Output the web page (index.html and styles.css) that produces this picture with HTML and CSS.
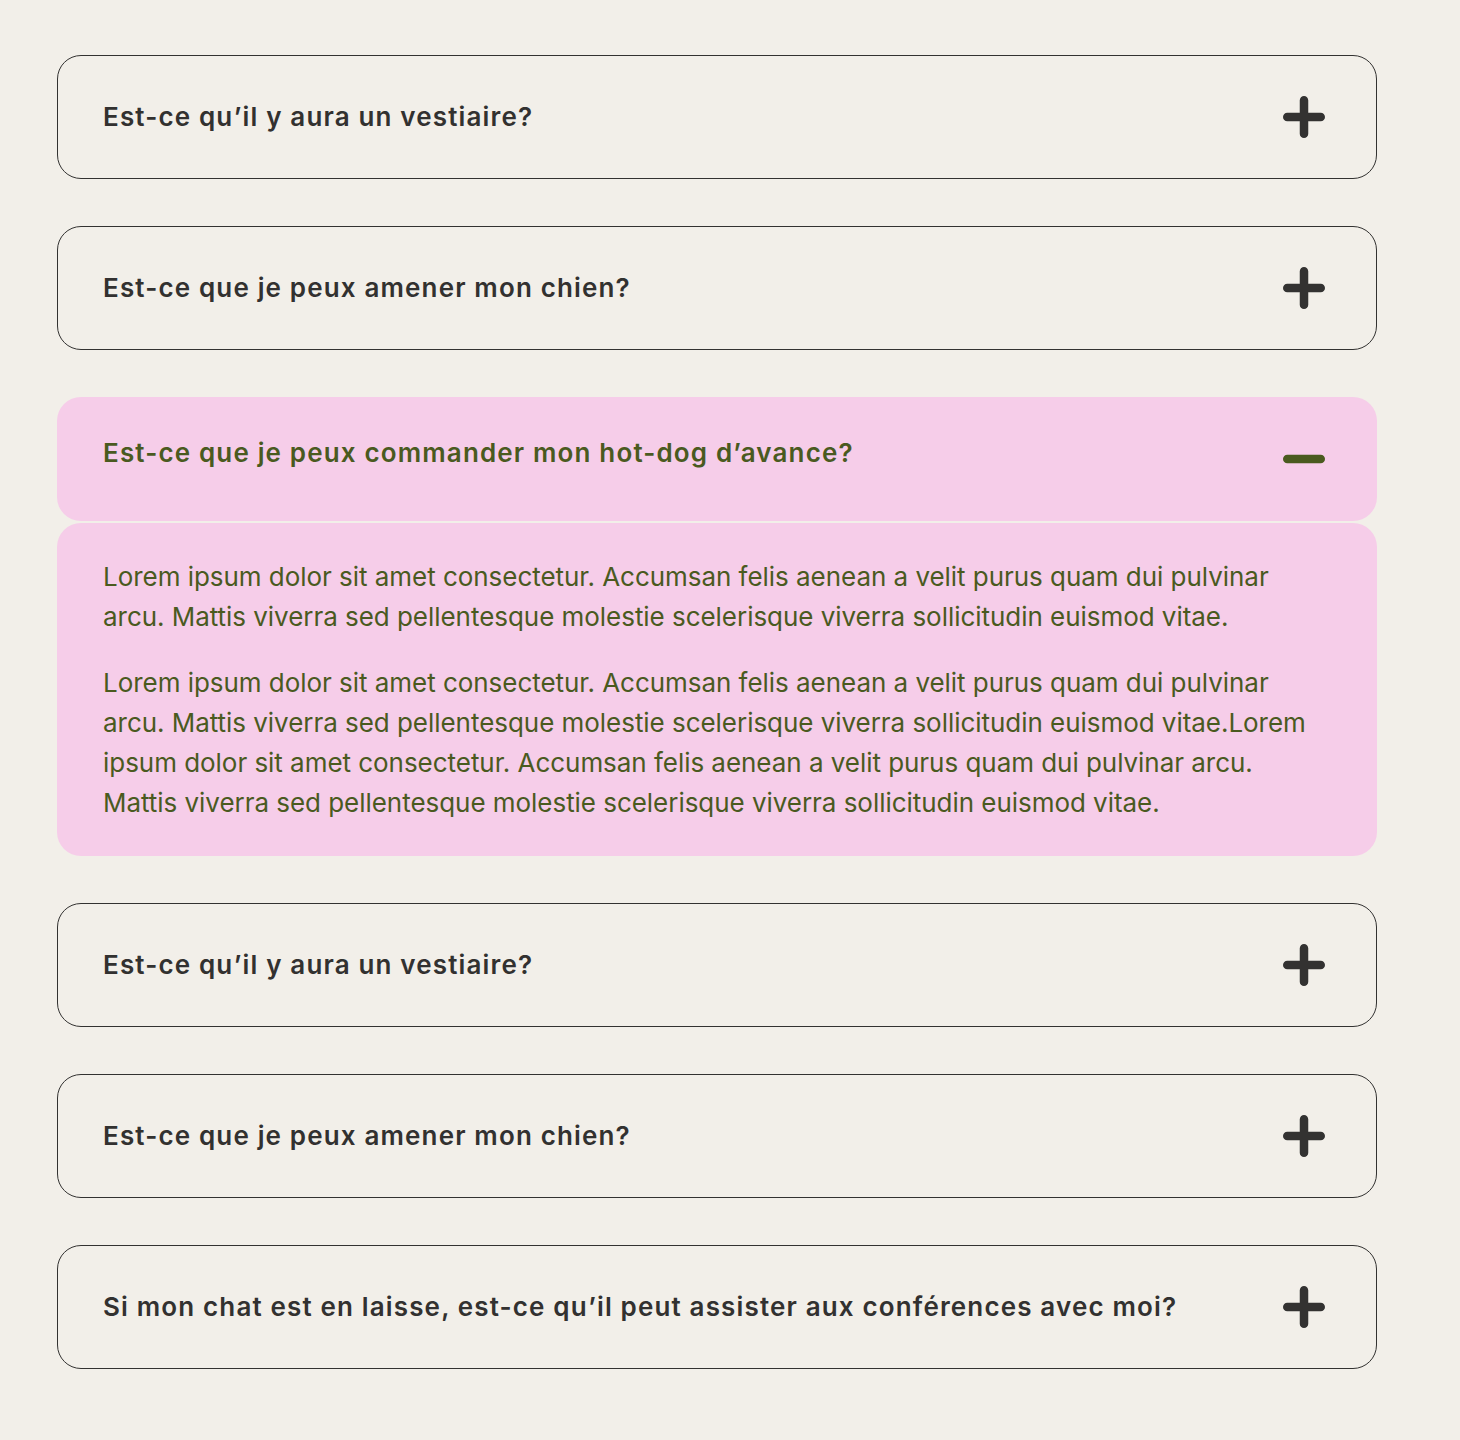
FILE: index.html
```html
<!DOCTYPE html>
<html lang="fr">
<head>
<meta charset="utf-8">
<title>FAQ</title>
<link rel="stylesheet" href="styles.css">
</head>
<body>
<main class="faq">
  <div class="item">
    <div class="head">
      <span class="q">Est-ce qu’il y aura un vestiaire?</span>
      <svg class="icon" viewBox="0 0 42 42"><path d="M4.25 21H37.75M21 4.25V37.75"/></svg>
    </div>
  </div>
  <div class="item">
    <div class="head">
      <span class="q">Est-ce que je peux amener mon chien?</span>
      <svg class="icon" viewBox="0 0 42 42"><path d="M4.25 21H37.75M21 4.25V37.75"/></svg>
    </div>
  </div>
  <div class="item open">
    <div class="head">
      <span class="q">Est-ce que je peux commander mon hot-dog d’avance?</span>
      <svg class="icon" viewBox="0 0 42 42"><path d="M4.25 21H37.75"/></svg>
    </div>
    <div class="body">
      <p>Lorem ipsum dolor sit amet consectetur. Accumsan felis aenean a velit purus quam dui pulvinar arcu. Mattis viverra sed pellentesque molestie scelerisque viverra sollicitudin euismod vitae.</p>
      <p>Lorem ipsum dolor sit amet consectetur. Accumsan felis aenean a velit purus quam dui pulvinar arcu. Mattis viverra sed pellentesque molestie scelerisque viverra sollicitudin euismod vitae.Lorem ipsum dolor sit amet consectetur. Accumsan felis aenean a velit purus quam dui pulvinar arcu. Mattis viverra sed pellentesque molestie scelerisque viverra sollicitudin euismod vitae.</p>
    </div>
  </div>
  <div class="item">
    <div class="head">
      <span class="q">Est-ce qu’il y aura un vestiaire?</span>
      <svg class="icon" viewBox="0 0 42 42"><path d="M4.25 21H37.75M21 4.25V37.75"/></svg>
    </div>
  </div>
  <div class="item">
    <div class="head">
      <span class="q">Est-ce que je peux amener mon chien?</span>
      <svg class="icon" viewBox="0 0 42 42"><path d="M4.25 21H37.75M21 4.25V37.75"/></svg>
    </div>
  </div>
  <div class="item">
    <div class="head">
      <span class="q">Si mon chat est en laisse, est-ce qu’il peut assister aux conférences avec moi?</span>
      <svg class="icon" viewBox="0 0 42 42"><path d="M4.25 21H37.75M21 4.25V37.75"/></svg>
    </div>
  </div>
</main>
</body>
</html>
```

FILE: styles.css
```css
html, body {
  margin: 0;
  padding: 0;
  background: #f2efe9;
}

body {
  font-family: Inter, "Noto Sans", sans-serif;
  color: #323130;
}

.faq {
  width: 1320px;
  margin: 55px 0 0 57px;
  display: flex;
  flex-direction: column;
  gap: 47px;
  padding-bottom: 60px;
}

.item {
  display: flex;
  flex-direction: column;
  gap: 2px;
}

.head {
  box-sizing: border-box;
  height: 124px;
  display: flex;
  align-items: center;
  justify-content: space-between;
  padding: 0 51px 0 45px;
  border: 1px solid #333231;
  border-radius: 24px;
}

.q {
  font-size: 26px;
  font-weight: 600;
  line-height: 32px;
  letter-spacing: 1.15px;
}

.icon {
  width: 42px;
  height: 42px;
  flex: none;
}

.icon path {
  fill: none;
  stroke: #333231;
  stroke-width: 8.5;
  stroke-linecap: round;
}

.open .head {
  border: none;
  background: #f6cde9;
  padding: 0 52px 0 46px;
  color: #4a5a1f;
}

.open .q {
  margin-bottom: 12px;
}

.open .icon path {
  stroke: #4a5a1f;
}

.body {
  background: #f6cde9;
  border-radius: 24px;
  padding: 34px 46px 33px;
  color: #4a5a1f;
}

.body p {
  margin: 0;
  font-size: 26px;
  line-height: 40px;
  font-weight: 400;
  letter-spacing: -0.04px;
}

.body p + p {
  margin-top: 26px;
}
```
